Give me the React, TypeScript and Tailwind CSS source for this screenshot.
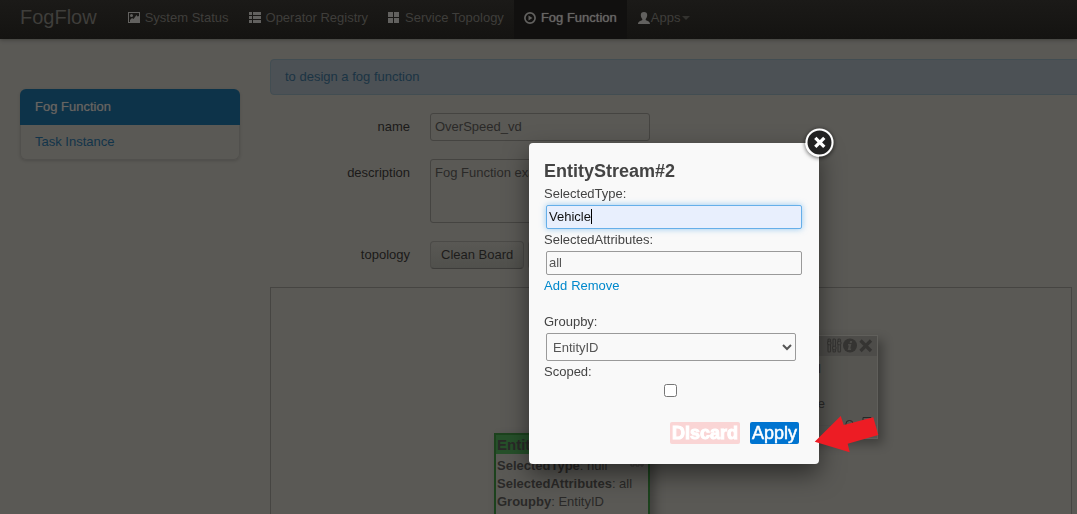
import type { ReactNode } from 'react';

const PictureIcon = () => (
  <svg width="12" height="11" viewBox="0 0 12 11" fill="currentColor" aria-hidden="true">
    <path fillRule="evenodd" d="M0 0h12v11H0zM1 1v9h10V1z" />
    <circle cx="3.500" cy="3.500" r="1.500" />
    <path d="M2 10V8l2-2 1.500 1L8.500 3l1 1.500L11 4v6z" />
  </svg>
);

const ListIcon = () => (
  <svg width="12" height="11" viewBox="0 0 12 11" fill="currentColor" aria-hidden="true">
    <path d="M0 0h3v3H0zM4 0h8v3H4zM0 4h3v3H0zM4 4h8v3H4zM0 8h3v3H0zM4 8h8v3H4z" />
  </svg>
);

const GridIcon = () => (
  <svg width="12" height="11" viewBox="0 0 12 11" fill="currentColor" aria-hidden="true">
    <path d="M0 0h5v5H0zM6 0h5v5H6zM0 6h5v5H0zM6 6h5v5H6z" />
  </svg>
);

const PlayIcon = () => (
  <svg width="12" height="12" viewBox="0 0 12 12" aria-hidden="true">
    <circle cx="6" cy="6" r="5.100" fill="none" stroke="currentColor" strokeWidth="1.700" />
    <path d="M4.500 3.500v5L8.500 6z" fill="currentColor" />
  </svg>
);

const UserIcon = () => (
  <svg width="12" height="12" viewBox="0 0 12 12" fill="currentColor" aria-hidden="true">
    <path d="M6 0c2.200 0 3.200 1.200 3.200 3 0 1.700-.7 3-1.500 3.900v1.200c.6.700 4.300 1.100 4.300 3.900H0c0-2.800 3.700-3.200 4.300-3.900V6.900C3.500 6 2.800 4.700 2.800 3c0-1.800 1-3 3.200-3z" />
  </svg>
);

function NavItem({ icon, label, active }: { icon: ReactNode; label: string; active?: boolean }) {
  return (
    <a
      href="#"
      className={
        active
          ? 'flex items-center gap-1 bg-[#11100f] px-[10px] pb-1 text-[#666563] [text-shadow:0_0_1px_#666563]'
          : 'flex items-center gap-1 px-[10px] pb-1'
      }
    >
      <span className="w-[13px] text-[#62615f]">{icon}</span>
      {label}
    </a>
  );
}

function NodeIcons() {
  return (
    <svg width="50" height="16" viewBox="0 0 50 16" className="text-[#353432]" aria-hidden="true">
      <g fill="none" stroke="currentColor" strokeWidth="1.200">
        <rect x="1" y="1" width="2.500" height="13" rx="1" />
        <rect x="6" y="1" width="2.500" height="13" rx="1" />
        <rect x="11" y="1" width="2.500" height="13" rx="1" />
      </g>
      <g fill="#4b4a47" stroke="currentColor">
        <circle cx="2.300" cy="5" r="1.800" />
        <circle cx="7.300" cy="10" r="1.800" />
        <circle cx="12.300" cy="5" r="1.800" />
      </g>
      <circle cx="23" cy="7.500" r="7" fill="currentColor" />
      <path d="M23 3h2.200l-.4 2h-2.200zM21.100 6h3.300l-1.100 4.600h1l-.3 1.400h-3.300l1.100-4.600h-1z" fill="#4b4a47" />
      <path d="M33.500 2.500l10.500 10.500m0-10.500L33.500 13" stroke="currentColor" strokeWidth="3.200" />
    </svg>
  );
}

function Label({ children, id }: { children: ReactNode; id: string }) {
  return (
    <label htmlFor={id} className="w-[140px] shrink-0 pt-[5px] text-right text-[#1b1a19]">
      {children}
    </label>
  );
}

function StreamDialog() {
  return (
    <div
      role="dialog"
      aria-labelledby="dialog-title"
      className="fixed left-[529px] top-[143px] w-[290px] rounded-[4px] bg-[#f9f9f9] px-[15px] pb-5 pt-[15px] text-[#444] shadow-[0_10px_25px_rgba(0,0,0,0.5)]"
    >
      <button
        type="button"
        aria-label="Close"
        className="absolute -right-[15px] -top-[15px] rounded-full shadow-[0_1px_4px_rgba(0,0,0,0.6)]"
      >
        <svg width="29" height="29" viewBox="0 0 29 29" className="block">
          <circle cx="14.500" cy="14.500" r="13" fill="#222" stroke="#fff" strokeWidth="2" />
          <path d="M10.300 9.800l9 9m0-9l-9 9" stroke="#fff" strokeWidth="3.300" />
        </svg>
      </button>
      <h3 id="dialog-title" className="text-[18px] font-bold leading-[27px]">EntityStream#2</h3>
      <label htmlFor="type" className="block">SelectedType:</label>
      <div className="relative m-[2px]">
        <input
          id="type"
          defaultValue="Vehicle"
          className="block h-6 w-full rounded-[2px] border border-[#66afe9] bg-[#e8effd] px-[2px] pb-[2px] text-[#111] caret-transparent shadow-[0_0_6px_rgba(82,168,236,0.6)] outline-none"
        />
        <span className="absolute left-[45px] top-1 h-[15px] w-px bg-black" />
      </div>
      <label htmlFor="attributes" className="block">SelectedAttributes:</label>
      <div className="m-[2px]">
        <input
          id="attributes"
          defaultValue="all"
          className="block h-6 w-full rounded-[2px] border border-[#9a9a9a] bg-[#f9f9f9] px-[2px] pb-[2px] text-[#555]"
        />
      </div>
      <div className="mb-[18px] flex gap-1 text-[#0088cc]">
        <a href="#">Add</a>
        <a href="#">Remove</a>
      </div>
      <label htmlFor="groupby" className="block">Groupby:</label>
      <select
        id="groupby"
        className="m-[2px] block h-7 w-[250px] rounded-[2px] border border-[#9a9a9a] bg-[#f9f9f9] px-[2px] text-[#555]"
      >
        <option>EntityID</option>
      </select>
      <label htmlFor="scoped" className="block">Scoped:</label>
      <input id="scoped" type="checkbox" className="ml-[120px] mt-[3px] block h-[13px] w-[13px]" />
      <div className="mr-[5px] mt-[25px] flex justify-end gap-[10px] text-[18px] leading-[22px] text-white">
        <button type="button" className="rounded-[2px] bg-[#fad5d5] px-[2px] font-bold [-webkit-text-stroke:1px_white]">
          Discard
        </button>
        <button type="button" className="rounded-[2px] bg-[#0074d0] px-[2px] [-webkit-text-stroke:0.5px_white]">
          Apply
        </button>
      </div>
    </div>
  );
}

export default function App() {
  return (
    <div className="h-screen overflow-hidden bg-[#5a5955] font-['Liberation_Sans',Arial,sans-serif] text-[13px] leading-[18px] text-[#2a2928]">
      <nav className="flex h-[39px] bg-linear-to-b from-[#1b1a18] to-[#141311] pl-5 text-[#3f3e3b] shadow-[0_1px_4px_rgba(0,0,0,0.3)]">
        <a href="#" className="mr-[21px] pt-[7px] text-[20px] leading-5">FogFlow</a>
        <NavItem icon={<PictureIcon />} label="System Status" />
        <NavItem icon={<ListIcon />} label="Operator Registry" />
        <NavItem icon={<GridIcon />} label="Service Topology" />
        <NavItem icon={<PlayIcon />} label="Fog Function" active />
        <a href="#" className="flex items-center px-[11px] pb-1">
          <span className="mr-px text-[#62615f]"><UserIcon /></span>
          Apps
          <svg width="8" height="4" viewBox="0 0 8 4" className="ml-[2px]" aria-hidden="true">
            <path d="M0 0h8L4 4z" fill="#33322f" />
          </svg>
        </a>
      </nav>

      <div className="flex gap-[30px] pl-5 pt-5">
        <aside className="w-[220px] shrink-0 pt-[30px]">
          <ul className="overflow-hidden rounded-[6px] shadow-[0_1px_3px_rgba(0,0,0,0.15)]">
            <li>
              <a href="#" className="block bg-[#0d3349] px-[15px] py-[9px] text-[#666563] [text-shadow:0_0_1px_#50504f]">
                Fog Function
              </a>
            </li>
            <li>
              <a href="#" className="block rounded-b-[6px] border border-t-0 border-[#51504d] px-[14px] py-2 text-[#12344a]">
                Task Instance
              </a>
            </li>
          </ul>
        </aside>

        <main className="min-w-0 flex-1 pr-[5px]">
          <div className="-mr-[10px] mb-[18px] rounded-[4px] border border-[#424d52] bg-[#4c5155] px-[14px] py-2 text-[#1b3444]">
            to design a fog function
          </div>
          <form className="flex flex-col gap-[18px]">
            <div className="flex gap-5">
              <Label id="name">name</Label>
              <input
                id="name"
                defaultValue="OverSpeed_vd"
                className="h-7 w-[220px] rounded-[3px] border border-[#454441] bg-transparent px-1 pb-[2px]"
              />
            </div>
            <div className="flex gap-5">
              <Label id="description">description</Label>
              <textarea
                id="description"
                defaultValue="Fog Function example"
                className="block h-16 w-[220px] resize-none rounded-[3px] border border-[#454441] bg-transparent p-1"
              />
            </div>
            <div className="flex gap-5">
              <span className="w-[140px] shrink-0 pt-[5px] text-right text-[#1b1a19]">topology</span>
              <div className="flex gap-1">
                <button
                  type="button"
                  className="h-7 rounded-[4px] border border-[#4b4a47] border-b-[#3d3c3a] bg-linear-to-b from-[#595854] to-[#50504c] px-[10px] text-[#1d1c1b]"
                >
                  Clean Board
                </button>
                <button
                  type="button"
                  className="h-7 rounded-[4px] border border-[#4b4a47] border-b-[#3d3c3a] bg-linear-to-b from-[#595854] to-[#50504c] px-[10px] text-[#1d1c1b]"
                >
                  Save Board
                </button>
              </div>
            </div>
          </form>

          <section className="relative mt-[18px] h-[500px] border border-[#464542]">
            <div className="absolute left-[430px] top-[47px] h-[104px] w-[177px] border border-[#605f5b] bg-[#565551] shadow-[5px_5px_10px_rgba(0,0,0,0.3)]">
              <div className="flex h-5 items-center justify-end bg-[#4d4c49]">
                <NodeIcons />
              </div>
              <div className="flex h-[26px] items-center justify-end pr-14">Fog Deal</div>
              <div className="flex h-11 items-center justify-end border-b border-[#53524f] pr-[52px]">image</div>
              <svg width="32" height="12" viewBox="0 0 32 12" className="absolute bottom-[10px] right-0" fill="none" stroke="#292827" aria-hidden="true">
                <path d="M1 11V7.500a3.500 3 0 0 1 7 0V11M18 9V1.500h8V9" />
              </svg>
            </div>
            <div className="absolute left-[223px] top-[145px] h-[130px] w-[156px] border-2 border-[#1c421d] bg-[#5a5955] shadow-[5px_5px_10px_rgba(0,0,0,0.3)]">
              <div className="h-[19px] bg-[#26502a] pl-px text-[15px] font-bold leading-5">EntityStream</div>
              <div className="relative px-px pt-[3px]">
                <p><b>SelectedType</b>: null</p>
                <p><b>SelectedAttributes</b>: all</p>
                <p><b>Groupby</b>: EntityID</p>
                <svg width="14" height="8" viewBox="0 0 14 8" className="absolute right-1 top-[6px]" fill="none" stroke="#3c3b39" aria-hidden="true">
                  <path d="M1 2v4h3V2M6 2v4h3V2M11 2v4h2V2" />
                </svg>
              </div>
            </div>
          </section>
        </main>
      </div>

      <StreamDialog />
      <svg width="66" height="38" viewBox="0 0 66 38" className="fixed left-[814px] top-[415px]" fill="#ed1c24" aria-hidden="true">
        <path d="M.7 26.700L26.700 1l3 9 29.600-7.700 5 17.700-30.600 8.700 2 8.600z" />
      </svg>
    </div>
  );
}
